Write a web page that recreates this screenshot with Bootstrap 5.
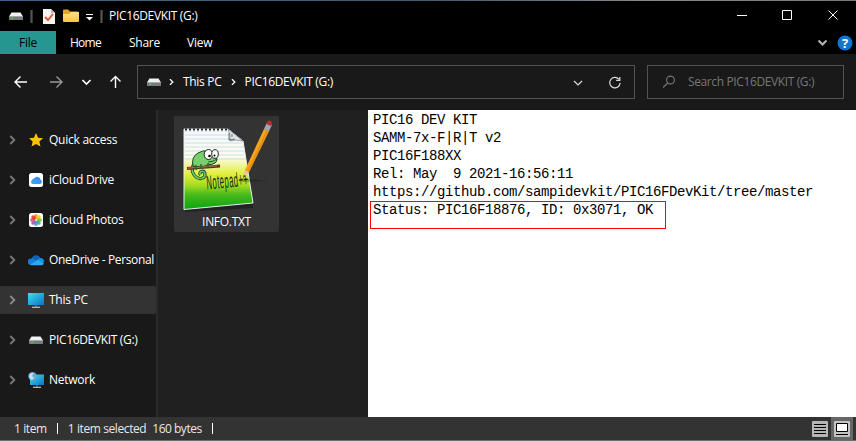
<!DOCTYPE html>
<html lang="en">
<head>
<meta charset="utf-8">
<title>PIC16DEVKIT (G:)</title>
<link href="https://cdn.jsdelivr.net/npm/bootstrap@5.3.0/dist/css/bootstrap.min.css" rel="stylesheet">
<style>
body{width:856px;height:441px;overflow:hidden;background:#191919;color:#fff;font:12px/16px "Open Sans","Noto Sans",sans-serif;letter-spacing:-.25px;white-space:nowrap}
svg{display:block;flex:none}
.titlebar{height:31px;background:#000;border-top:1px solid #3c5a75;border-image:linear-gradient(90deg,#3c6288,#46586c 50%,#85888b 75%,#777) 1;border-width:1px 0 0}
.sep{width:3px;height:13px;background:#555;border-left:1px solid #333;border-right:1px solid #333}
.tabs{height:23px;background:#000}
.tabs .filetab{width:56px;background:#269691;color:#000}
.toolrow{height:56px}
.boxed{height:34px;border:1px solid #535353}
.main-area{height:307px}
.side{width:158px;border-right:2px solid #2b2b2b;padding-top:16px}
.side-item{height:28px;margin:0 0 12px;padding-left:9px;border:0}
.side-item.current{background:#333;border-radius:0 2px 2px 0}
.side-item .ico{width:16px;margin:0 5px 0 12px}
.files{width:210px;background:#202020;padding:6px 0 0 16px}
.tile{width:105px;height:116px;background:#333;border-radius:2px}
.preview{background:#fff;color:#000;padding:1px 0 0 5px;flex:1}
.preview pre{font:14px/18px "Liberation Mono",monospace;letter-spacing:-.402px;margin:0;overflow:visible;color:#000}
.flag{position:absolute;left:2px;top:91px;width:296px;height:28px;border:1px solid #f00}
.statusbar{height:24px;background:#333;border-bottom:1px solid #6d6d6d;color:#e8e8e8;letter-spacing:-.4px}
.bar{width:1px;height:11px;background:#fff}
.viewbtn{width:22px;height:23px}
.viewbtn.on{background:#666}
.search{color:#777}
.drive-name{letter-spacing:-.33px}
</style>
<script src="https://cdn.jsdelivr.net/npm/bootstrap@5.3.0/dist/js/bootstrap.bundle.min.js"></script>
</head>
<body>
<svg width="0" height="0" class="position-absolute">
<defs>
<linearGradient id="gscreen" x1="0" y1="0" x2="1" y2="1"><stop offset="0" stop-color="#3fe0ec"/><stop offset="1" stop-color="#0b72c4"/></linearGradient>
<linearGradient id="gcloud" x1="0" y1="1" x2="1" y2="0"><stop offset="0" stop-color="#3ba9f8"/><stop offset="1" stop-color="#3b86ee"/></linearGradient>
<linearGradient id="gfold" x1="0" y1="0" x2="0" y2="1"><stop offset="0" stop-color="#ffe08a"/><stop offset="1" stop-color="#fcc63a"/></linearGradient>
<linearGradient id="gpage" x1="0" y1="0" x2="0" y2="1"><stop offset="0" stop-color="#f4f8fb"/><stop offset=".34" stop-color="#fbfdf0"/><stop offset=".56" stop-color="#e2ee3c"/><stop offset=".7" stop-color="#a5dc22"/><stop offset=".82" stop-color="#45b81c"/><stop offset="1" stop-color="#0ba510"/></linearGradient>
<symbol id="drive" viewBox="0 0 16 16"><path d="M3.500 4.500h9L15 8.500H1z" fill="#f1f2f4"/><rect x="1" y="8.300" width="14" height="3.700" rx=".6" fill="#777b80"/><path d="M1 8.500h14" stroke="#bbb" stroke-width=".7"/><rect x="3.500" y="9.500" width="1.600" height="1.300" fill="#35f22c"/></symbol>
<symbol id="chev" viewBox="0 0 7 10"><path d="M1.300 1l4 4-4 4" fill="none" stroke="currentColor" stroke-width="1.900"/></symbol>
</defs>
</svg>

<header class="titlebar d-flex align-items-center">
<svg width="16" height="16" style="margin-left:8px"><use href="#drive"/></svg>
<span class="sep" style="margin-left:6px"></span>
<svg width="14" height="17" viewBox="0 0 14 17" style="margin-left:9px"><path d="M1 1h8l4 4v11H1z" fill="#f5f5f5"/><path d="M9 1v4h4z" fill="#bbb"/><path d="M3 9l3 3 5-6" fill="none" stroke="#e5582b" stroke-width="1.900"/></svg>
<svg width="18" height="16" viewBox="0 0 18 16" style="margin-left:6px"><path d="M1 2.500q0-1 1-1h4l2 2h7q1 0 2 1V8H1z" fill="#e5a520"/><path d="M1 6h6l2-2h7q1 0 1 1v8q0 1-1 1H2q-1 0-1-1z" fill="url(#gfold)"/></svg>
<svg width="9" height="8" viewBox="0 0 9 8" style="margin-left:5px;margin-top:2px"><path d="M1 1.500h7" stroke="#fff"/><path d="M1 4h7L4.500 7.500z" fill="#fff"/></svg>
<span class="sep" style="margin-left:6px"></span>
<span style="margin-left:6px;letter-spacing:-.33px">PIC16DEVKIT (G:)</span>
<svg class="ms-auto" width="119" height="30" viewBox="737 1 119 30" fill="none" stroke="#fff"><path d="M737 15.500h10"/><path d="M782.500 10.500h9v9h-9z"/><path d="M828.500 10.500l9 9m0-9l-9 9"/></svg>
</header>

<nav class="tabs d-flex align-items-center">
<span class="filetab h-100 d-flex align-items-center justify-content-center">File</span>
<span style="margin-left:14px;letter-spacing:-.75px;width:59px">Home</span><span style="width:58px">Share</span><span>View</span>
<svg class="ms-auto" width="11" height="8" viewBox="0 0 11 8"><path d="M1.500 1.500l4 4 4-4" fill="none" stroke="#b7b7b7" stroke-width="2"/></svg>
<svg width="16" height="16" viewBox="0 0 16 16" style="margin:0 3px 0 9px"><circle cx="8" cy="8" r="7.500" fill="#0878d2"/><text x="8" y="12.500" text-anchor="middle" font-family="Open Sans" font-size="13" font-weight="700" fill="#fff">?</text></svg>
</nav>

<div class="toolrow d-flex align-items-center">
<svg width="137" height="34" viewBox="0 65 137 34" fill="none" stroke="#fff" stroke-width="1.400"><path d="M27 82H15.500M20.500 76.500L15 82l5.500 5.500"/><path d="M50 82h11.500M56.500 76.500L62 82l-5.500 5.500" stroke="#999"/><path d="M82.500 80l4 4 4-4" stroke-width="1.700"/><path d="M115.500 88V76.500M110.500 81.500l5-5 5 5"/></svg>
<div class="boxed d-flex align-items-center" style="width:498px;padding-left:8px">
<svg width="16" height="16"><use href="#drive"/></svg>
<svg width="5" height="8" viewBox="0 0 7 10" style="margin-left:7px"><use href="#chev"/></svg>
<span style="margin-left:9px;letter-spacing:-.3px">This PC</span>
<svg width="5" height="8" viewBox="0 0 7 10" style="margin-left:9px"><use href="#chev"/></svg>
<span style="margin-left:9px;letter-spacing:-.33px">PIC16DEVKIT (G:)</span>
<svg class="ms-auto" width="64" height="32" viewBox="570 66 64 32" fill="none" stroke="#ddd" stroke-width="1.200"><path d="M574 81l4 4 4-4"/><path d="M618.800 79.200a5.200 5.200 0 1 0 1.300 3.800M619.800 77v3.300h-3.600"/></svg>
</div>
<div class="boxed search d-flex align-items-center" style="width:197px;margin-left:12px;padding-left:14px">
<svg width="14" height="14" viewBox="0 0 14 14" fill="none" stroke="#777" stroke-width="1.100"><circle cx="8.500" cy="5" r="3.900"/><path d="M5.700 8L1 12.500"/></svg>
<span style="margin-left:12px;letter-spacing:-.38px">Search PIC16DEVKIT (G:)</span>
</div>
</div>

<main class="main-area d-flex">
<aside class="side">
<div class="side-item d-flex align-items-center"><svg width="7" height="10" color="#777"><use href="#chev"/></svg><svg class="ico" height="16" viewBox="0 0 16 16"><path d="M8 1l2.100 4.700 5 .5-3.800 3.400 1.200 5L8 12l-4.500 2.600 1.200-5L1 6.200l5-.5z" fill="#ffc20e"/></svg>Quick access</div>
<div class="side-item d-flex align-items-center"><svg width="7" height="10" color="#777"><use href="#chev"/></svg><svg class="ico" height="16" viewBox="0 0 16 16"><rect x="1" y="1" width="14" height="14" rx="2.500" fill="#fff"/><path d="M4.500 12a2.400 2.400 0 0 1-.2-4.300 2 2 0 0 1 2.300-1.500 3.300 3.300 0 0 1 6 1.600A2.200 2.200 0 0 1 12 12z" fill="url(#gcloud)"/></svg>iCloud Drive</div>
<div class="side-item d-flex align-items-center"><svg width="7" height="10" color="#777"><use href="#chev"/></svg><svg class="ico" height="16" viewBox="0 0 16 16"><rect x="1" y="1" width="14" height="14" rx="2.500" fill="#fff"/><g fill-opacity=".92"><ellipse cx="8" cy="4.600" rx="1.900" ry="2.600" fill="#f7941d"/><ellipse cx="8" cy="4.600" rx="1.900" ry="2.600" fill="#e8d21c" transform="rotate(45 8 8)"/><ellipse cx="8" cy="4.600" rx="1.900" ry="2.600" fill="#8cc63e" transform="rotate(90 8 8)"/><ellipse cx="8" cy="4.600" rx="1.900" ry="2.600" fill="#42b883" transform="rotate(135 8 8)"/><ellipse cx="8" cy="4.600" rx="1.900" ry="2.600" fill="#4b93d8" transform="rotate(180 8 8)"/><ellipse cx="8" cy="4.600" rx="1.900" ry="2.600" fill="#9262b8" transform="rotate(225 8 8)"/><ellipse cx="8" cy="4.600" rx="1.900" ry="2.600" fill="#d65a9b" transform="rotate(270 8 8)"/><ellipse cx="8" cy="4.600" rx="1.900" ry="2.600" fill="#ef3c25" transform="rotate(315 8 8)"/></g></svg>iCloud Photos</div>
<div class="side-item d-flex align-items-center" style="letter-spacing:-.36px"><svg width="7" height="10" color="#777"><use href="#chev"/></svg><svg class="ico" height="16" viewBox="0 0 16 16"><path d="M4 8a4.300 4.300 0 0 1 8.300-2L9 11H3z" fill="#0f62b8"/><path d="M3 13A3.300 3.300 0 0 1 3.300 6.400q1.700-.2 3 .8L11 11z" fill="#1280d8"/><path d="M9 8.500q1.500-3 4-2.400A3.500 3.500 0 0 1 16 10l-3 2z" fill="#1490df"/><path d="M2 12.600L9 8.300q1-.5 2 .2l4.800 2.700A2.500 2.500 0 0 1 13.500 13.300H3.500Q2.500 13.300 2 12.600z" fill="#2ba8f0"/></svg>OneDrive - Personal</div>
<div class="side-item current d-flex align-items-center"><svg width="7" height="10" color="#888"><use href="#chev"/></svg><svg class="ico" height="16" viewBox="0 0 16 16"><rect y="1" width="16" height="12" fill="url(#gscreen)"/><path d="M7.500 13h1v2h-1z" fill="#888"/><path d="M4 15.300h8" stroke="#b8c4cc" stroke-width="1.200"/></svg>This PC</div>
<div class="side-item drive-name d-flex align-items-center"><svg width="7" height="10" color="#777"><use href="#chev"/></svg><svg class="ico" height="16"><use href="#drive"/></svg>PIC16DEVKIT (G:)</div>
<div class="side-item d-flex align-items-center"><svg width="7" height="10" color="#777"><use href="#chev"/></svg><svg class="ico" height="16" viewBox="0 0 16 16"><rect x="2" y="2.500" width="14" height="10.500" fill="url(#gscreen)"/><path d="M8.500 13h1v2h-1z" fill="#888"/><path d="M5 15.300h8" stroke="#b8c4cc" stroke-width="1.200"/><circle cx="4.500" cy="4.300" r="4.200" fill="#68a9cf"/><path d="M1.500 2.500Q4 0 5.500 1.500L4 4l2 2-2 2Q1 7 1.500 2.500z" fill="#c5e4f2"/></svg>Network</div>
</aside>
<section class="files">
<div class="tile d-flex flex-column align-items-center">
<svg width="105" height="97" viewBox="174 116 105 97">
<path d="M184 129l44-1 15 12 10 68-68 4z" fill="#111" opacity=".5"/>
<path d="M184 129h44l15 12 10 62-69 6.500z" fill="url(#gpage)" stroke="#e9eef0"/>
<path d="M185 135h47M185 139h56M185 143h57M185 147h58M185 151h59M185 155h59M185 159h60" stroke="#a9c9df" stroke-width=".7" opacity=".8"/>
<path d="M185 129.500h43" stroke="#222" stroke-width="2.200" stroke-dasharray="2 2"/>
<path d="M185 131h43" stroke="#aaa" stroke-width=".8" stroke-dasharray="2 2"/>
<path d="M228 129l15 12q-7-2-13 0 1-6-2-12z" fill="#dfe4e8" stroke="#667" stroke-width=".6"/><path d="M229 133v7l6-1M232 134v3" fill="none" stroke="#555" stroke-width=".8"/>
<path d="M194.500 163q-4 6-1 11 3 5 8 4.500 4-1 3.500-5-1-3-4-2-2 1.500-.5 3.500" fill="none" stroke="#154d20" stroke-width="3.200"/>
<path d="M194.500 163q-4 6-1 11 3 5 8 4.500 4-1 3.500-5-1-3-4-2-2 1.500-.5 3.500" fill="none" stroke="#6fc864" stroke-width="1.600"/>
<path d="M193 166q-2-9 5-13 5-3 10-2l7 4q4 5 0 8-3 2-7 1.500l-5 2.500q-5 0-10-1z" fill="#78cf6c" stroke="#154d20"/>
<path d="M187 168.500l33-2.500" stroke="#5b3522" stroke-width="2.800"/><path d="M190 168l27-2.200" stroke="#b3785c" stroke-width="1"/><circle cx="189" cy="168.300" r="1.500" fill="#c33"/>
<path d="M196 165v5M201 164v5M208 163v4" stroke="#2a6b2b" stroke-width="1.500"/>
<path d="M208 162q5 0 9-3" fill="none" stroke="#153a1a" stroke-width=".8"/>
<ellipse cx="208.500" cy="154.500" rx="4.300" ry="5" fill="#fff" stroke="#222"/><ellipse cx="215" cy="154" rx="3.300" ry="4.300" fill="#fff" stroke="#222"/><circle cx="209.500" cy="156" r="1.300"/><circle cx="214.500" cy="155.500" r="1"/>
<text transform="translate(207 189.500) rotate(-5) scale(.38 1)" font-family="Liberation Sans" font-size="20" letter-spacing="1.300" fill="#132c0b">Notepad++</text>
<path d="M241 178l28 3-27 1z" fill="#111" opacity=".3"/>
<path d="M244.500 171L264 129l5 2-20 41z" fill="#f3a51c"/><path d="M247 171.500L266.500 130l2.500 1-20 41z" fill="#e8910e"/>
<path d="M243.300 177.500l1.200-7.500 4.500 2z" fill="#e5c698"/><path d="M243.200 178l.5-3 1.700.9z" fill="#222"/>
<path d="M264 129l3-6.500 5 2.200-3 6.500z" fill="#a6a6ae"/><path d="M266.300 124l1-2.500q1-1.500 3-.7t1.500 2.700l-.8 2.400z" fill="#b42f32"/>
</svg>
<span style="margin-top:1px;letter-spacing:-.3px">INFO.TXT</span>
</div>
</section>
<section class="preview position-relative"><pre>PIC16 DEV KIT
SAMM-7x-F|R|T v2
PIC16F188XX
Rel: May  9 2021-16:56:11
https://github.com/sampidevkit/PIC16FDevKit/tree/master
Status: PIC16F18876, ID: 0x3071, OK</pre><div class="flag"></div></section>
</main>

<footer class="statusbar d-flex align-items-center">
<span style="margin-left:14px">1 item</span><span class="bar" style="margin-left:10px"></span>
<span style="margin-left:10px">1 item selected</span><span style="margin-left:6px;letter-spacing:-.5px">160 bytes</span><span class="bar" style="margin-left:10px"></span>
<span class="viewbtn ms-auto d-flex align-items-center justify-content-center"><svg width="16" height="16" viewBox="0 0 16 16"><rect width="16" height="16" rx="1" fill="#b5b5b5"/><path d="M2 3.500h12M2 6.500h12M2 9.500h12M2 12.500h12" stroke="#000"/></svg></span>
<span class="viewbtn on d-flex align-items-center justify-content-center" style="margin-right:3px"><svg width="16" height="16" viewBox="0 0 16 16"><rect width="16" height="16" rx="1" fill="#c4c4c4"/><path d="M2.500 2.500h11v8h-11z" fill="#fff" stroke="#000"/><path d="M2 13.500h12" stroke="#000"/></svg></span>
</footer>
</body>
</html>
